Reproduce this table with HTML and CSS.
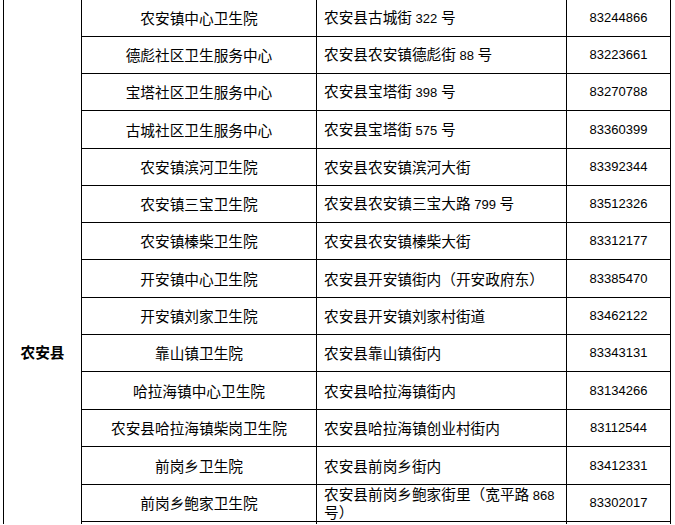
FILE: index.html
```html
<!DOCTYPE html>
<html lang="zh-CN">
<head>
<meta charset="utf-8">
<title>农安县卫生院</title>
<link rel="stylesheet" href="styles.css">
</head>
<body>
<div class="sheet">
  <div class="county"><span>农安县</span></div>

  <div class="name"><span>农安镇中心卫生院</span></div>
  <div class="addr"><span>农安县古城街<span class="n"> 322 </span>号</span></div>
  <div class="tel"><span>83244866</span></div>

  <div class="name"><span>德彪社区卫生服务中心</span></div>
  <div class="addr"><span>农安县农安镇德彪街<span class="n"> 88 </span>号</span></div>
  <div class="tel"><span>83223661</span></div>

  <div class="name"><span>宝塔社区卫生服务中心</span></div>
  <div class="addr"><span>农安县宝塔街<span class="n"> 398 </span>号</span></div>
  <div class="tel"><span>83270788</span></div>

  <div class="name"><span>古城社区卫生服务中心</span></div>
  <div class="addr"><span>农安县宝塔街<span class="n"> 575 </span>号</span></div>
  <div class="tel"><span>83360399</span></div>

  <div class="name"><span>农安镇滨河卫生院</span></div>
  <div class="addr"><span>农安县农安镇滨河大街</span></div>
  <div class="tel"><span>83392344</span></div>

  <div class="name"><span>农安镇三宝卫生院</span></div>
  <div class="addr"><span>农安县农安镇三宝大路<span class="n"> 799 </span>号</span></div>
  <div class="tel"><span>83512326</span></div>

  <div class="name"><span>农安镇榛柴卫生院</span></div>
  <div class="addr"><span>农安县农安镇榛柴大街</span></div>
  <div class="tel"><span>83312177</span></div>

  <div class="name"><span>开安镇中心卫生院</span></div>
  <div class="addr"><span>农安县开安镇街内（开安政府东）</span></div>
  <div class="tel"><span>83385470</span></div>

  <div class="name"><span>开安镇刘家卫生院</span></div>
  <div class="addr"><span>农安县开安镇刘家村街道</span></div>
  <div class="tel"><span>83462122</span></div>

  <div class="name"><span>靠山镇卫生院</span></div>
  <div class="addr"><span>农安县靠山镇街内</span></div>
  <div class="tel"><span>83343131</span></div>

  <div class="name"><span>哈拉海镇中心卫生院</span></div>
  <div class="addr"><span>农安县哈拉海镇街内</span></div>
  <div class="tel"><span>83134266</span></div>

  <div class="name"><span>农安县哈拉海镇柴岗卫生院</span></div>
  <div class="addr"><span>农安县哈拉海镇创业村街内</span></div>
  <div class="tel"><span>83112544</span></div>

  <div class="name"><span>前岗乡卫生院</span></div>
  <div class="addr"><span>农安县前岗乡街内</span></div>
  <div class="tel"><span>83412331</span></div>

  <div class="name"><span>前岗乡鲍家卫生院</span></div>
  <div class="addr"><span>农安县前岗乡鲍家街里（宽平路<span class="n"> 868 </span>号）</span></div>
  <div class="tel"><span>83302017</span></div>

  <div class="name"></div>
  <div class="addr"></div>
  <div class="tel"></div>
</div>
</body>
</html>
```

FILE: styles.css
```css
html, body {
  margin: 0;
  background: #fff;
}

body {
  font-family: "Noto Sans CJK SC", sans-serif;
  font-size: 14.67px;
  color: #000;
  overflow: hidden;
}

.sheet {
  display: grid;
  grid-template-columns: 77px 234px 249px 103px;
  grid-template-rows: 36px 36px 36px 37px 36px 36px 36px 37px 36px 36px 37px 36px 37px 36px 2px;
  gap: 1px;
  padding: 1px 1px 0 1px;
  background: #000;
  width: max-content;
  margin: -1px 0 0 3px;
}

.sheet > div {
  background: #fff;
  display: flex;
  align-items: center;
  line-height: 16px;
}

.county {
  grid-row: 1 / span 15;
  justify-content: center;
  align-items: flex-start !important;
  padding-top: 344px;
  font-weight: bold;
}

.name {
  justify-content: center;
}

.addr {
  padding: 0 6px 0 7px;
}

.tel {
  justify-content: center;
  font-family: "Liberation Sans", sans-serif;
  font-size: 13px;
}

.n {
  font-family: "Liberation Sans", sans-serif;
  font-size: 13px;
}
```
